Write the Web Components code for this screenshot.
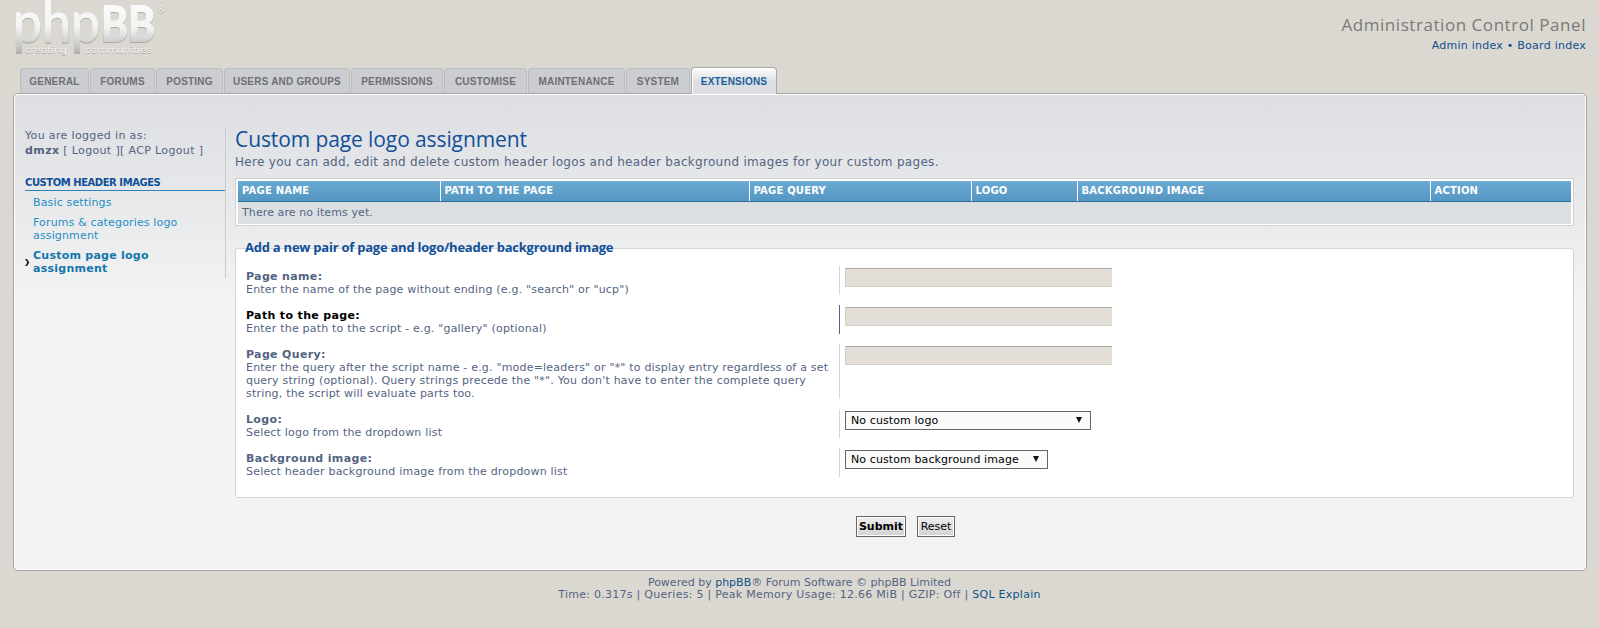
<!DOCTYPE html>
<html>
<head>
<meta charset="utf-8">
<title>Custom page logo assignment</title>
<style>
html, body { margin: 0; padding: 0; background: #dbd8d1; }
body { font-family: "DejaVu Sans", Verdana, sans-serif; font-size: 11px; color: #536482; }
</style>
</head>
<body>
<acp-page>
  <acp-header slot="header"></acp-header>
  <acp-tabs slot="tabs">
    <acp-tab w="69">GENERAL</acp-tab>
    <acp-tab w="65">FORUMS</acp-tab>
    <acp-tab w="67">POSTING</acp-tab>
    <acp-tab w="126">USERS AND GROUPS</acp-tab>
    <acp-tab w="92">PERMISSIONS</acp-tab>
    <acp-tab w="83">CUSTOMISE</acp-tab>
    <acp-tab w="97">MAINTENANCE</acp-tab>
    <acp-tab w="64">SYSTEM</acp-tab>
    <acp-tab w="86" active>EXTENSIONS</acp-tab>
  </acp-tabs>
  <acp-panel slot="panel">
    <acp-side slot="side"></acp-side>
    <acp-title>
      <span slot="title">Custom page logo assignment</span>
      Here you can add, edit and delete custom header logos and header background images for your custom pages.
    </acp-title>
    <acp-table></acp-table>
    <acp-fieldset legend="Add a new pair of page and logo/header background image">
      <acp-row>
        <span slot="label">Page name:</span>
        Enter the name of the page without ending (e.g. "search" or "ucp")
        <acp-input slot="field"></acp-input>
      </acp-row>
      <acp-row hover>
        <span slot="label">Path to the page:</span>
        Enter the path to the script - e.g. "gallery" (optional)
        <acp-input slot="field"></acp-input>
      </acp-row>
      <acp-row>
        <span slot="label">Page Query:</span>
        Enter the query after the script name - e.g. "mode=leaders" or "*" to display entry regardless of a set query string (optional). Query strings precede the "*". You don't have to enter the complete query string, the script will evaluate parts too.
        <acp-input slot="field"></acp-input>
      </acp-row>
      <acp-row>
        <span slot="label">Logo:</span>
        Select logo from the dropdown list
        <acp-select slot="field" w="246">No custom logo</acp-select>
      </acp-row>
      <acp-row>
        <span slot="label">Background image:</span>
        Select header background image from the dropdown list
        <acp-select slot="field" w="203">No custom background image</acp-select>
      </acp-row>
    </acp-fieldset>
    <acp-buttons></acp-buttons>
  </acp-panel>
  <acp-footer slot="footer"></acp-footer>
</acp-page>

<script>
const FONT = '"DejaVu Sans", Verdana, sans-serif'
const TITLE_FONT = '"Open Sans", "DejaVu Sans", sans-serif'

// small helper, every element is the same: open shadow root + markup
function define(name, html) {
  customElements.define(name, class extends HTMLElement {
    connectedCallback() {
      if (this.shadowRoot) return
      this.attachShadow({ mode: 'open' })
      this.shadowRoot.innerHTML = typeof html === 'function' ? html(this) : html
    }
  })
}

define('acp-page', `
<style>
  :host { display: block; width: 1599px; height: 628px; overflow: hidden; }
  .wrap { padding: 0 12px 0 13px; }
</style>
<slot name="header"></slot>
<div class="wrap"><slot name="tabs"></slot><slot name="panel"></slot></div>
<slot name="footer"></slot>
`)

define('acp-header', `
<style>
  :host { display: flex; justify-content: space-between; height: 67px; box-sizing: border-box; padding: 0 13px 0 0; }
  svg { display: block; }
  .right { text-align: right; padding-top: 15px; }
  .acp { font: 17px/20px ${TITLE_FONT}; color: #7a7a78; letter-spacing: 0.55px; }
  .nav { font: 11px/14px ${FONT}; color: #114d8f; margin-top: 4px; letter-spacing: 0.25px; }
</style>
<svg width="172" height="64" viewBox="0 0 172 64">
  <defs>
    <linearGradient id="lg" x1="0" y1="0" x2="0" y2="1">
      <stop offset="0" stop-color="#ffffff"/>
      <stop offset="0.6" stop-color="#f2f2f2"/>
      <stop offset="1" stop-color="#b4b4b4"/>
    </linearGradient>
    <filter id="edge" x="-10%" y="-10%" width="120%" height="120%">
      <feDropShadow dx="0" dy="0.5" stdDeviation="0.7" flood-color="#6f6f6c" flood-opacity="0.9"/>
    </filter>
  </defs>
  <g filter="url(#edge)">
    <text x="13" y="42" font-family="Lato, 'DejaVu Sans', sans-serif" font-size="56" textLength="87" lengthAdjust="spacingAndGlyphs" fill="url(#lg)" stroke="url(#lg)" stroke-width="1.5">php</text>
    <text x="101" y="41" font-family="Lato, 'DejaVu Sans', sans-serif" font-size="48" font-weight="700" textLength="54" lengthAdjust="spacingAndGlyphs" fill="url(#lg)" stroke="url(#lg)" stroke-width="2">BB</text>
    <text x="156" y="13" font-family="'DejaVu Sans', sans-serif" font-size="10" fill="#f7f7f5">®</text>
    <text x="25" y="53" font-family="'DejaVu Sans', sans-serif" font-size="9" textLength="42" lengthAdjust="spacingAndGlyphs" fill="#f5f5f3">creating</text>
    <text x="85" y="53" font-family="'DejaVu Sans', sans-serif" font-size="9" textLength="67" lengthAdjust="spacingAndGlyphs" fill="#f5f5f3">communities</text>
  </g>
</svg>
<div class="right">
  <div class="acp">Administration Control Panel</div>
  <div class="nav">Admin index • Board index</div>
</div>
`)

define('acp-tabs', `
<style>
  :host { display: flex; gap: 1px; padding-left: 7px; height: 26px; align-items: flex-end; position: relative; z-index: 1; }
</style>
<slot></slot>
`)

define('acp-tab', el => {
  const on = el.hasAttribute('active')
  return `
<style>
  :host {
    display: block; box-sizing: border-box; width: ${el.getAttribute('w')}px;
    height: ${on ? 27 : 25}px;
    margin-bottom: ${on ? -1 : 0}px;
    border: 1px solid ${on ? '#a9a9a9' : '#bcbcbc'};
    border-bottom: ${on ? 'none' : '1px solid #cbcdd2'};
    border-radius: 4px 4px 0 0;
    background: ${on ? 'linear-gradient(#fff, #dcdee2 50%)' : '#cbcdd2'};
    box-shadow: ${on ? 'inset 1px 1px 0 #fff' : 'none'};
    color: ${on ? '#1d5e9a' : '#707070'};
    font: bold 10px/${on ? 27 : 25}px "Liberation Sans", Arial, sans-serif;
    letter-spacing: 0.2px; text-align: center; white-space: nowrap;
  }
</style>
<slot></slot>
`
})

define('acp-panel', `
<style>
  :host {
    display: grid; grid-template-columns: 201px 1fr; box-sizing: border-box; height: 478px;
    border: 1px solid #a4a4a2; border-radius: 5px; box-shadow: inset 1px 1px 0 #fff, inset -1px -1px 0 #fff;
    background: linear-gradient(#dcdee2, #f3f3f3 210px);
    padding: 33px 12px 0 11px;
  }
  .main { padding-left: 9px; min-width: 0; }
  .side { grid-row: 1; }
</style>
<div class="side"><slot name="side"></slot></div>
<div class="main"><slot></slot></div>
`)

define('acp-side', `
<style>
  :host { display: block; box-sizing: border-box; height: 151px; border-right: 1px solid #c9cbcf; font: 11px/15px ${FONT}; color: #536482; }
  .who { padding-top: 1px; letter-spacing: 0.35px; }
  b { letter-spacing: 0.4px; }
  h2 { margin: 18px 0 0; font: bold 10px/13px ${FONT}; color: #115098; border-bottom: 1px solid #2f82bb; padding-bottom: 1px; letter-spacing: -0.45px; }
  ul { list-style: none; margin: 5px 0 0; padding: 0 0 0 8px; color: #1f8fc4; font-size: 11px; line-height: 13px; letter-spacing: 0.15px; }
  li { margin-bottom: 7px; position: relative; }
  li.on { color: #1377ac; font-weight: bold; letter-spacing: 0.25px; }
  li.on svg { position: absolute; left: -8px; top: 10px; }
</style>
<div class="who">You are logged in as:<br><b>dmzx</b> [ Logout ][ ACP Logout ]</div>
<h2>CUSTOM HEADER IMAGES</h2>
<ul>
  <li>Basic settings</li>
  <li>Forums &amp; categories logo assignment</li>
  <li class="on"><svg width="5" height="7" viewBox="0 0 5 7"><path d="M0 0h2l2 3v1L2 7H0l2-3V3z" fill="#222"/></svg>Custom page logo assignment</li>
</ul>
`)

define('acp-title', `
<style>
  :host { display: block; font: 12px/14px ${FONT}; color: #536482; letter-spacing: 0.3px; white-space: nowrap; }
  .h { font: 21px/26px ${TITLE_FONT}; color: #115098; letter-spacing: -0.1px; margin-bottom: 3px; margin-top: -1px; }
</style>
<div class="h"><slot name="title"></slot></div>
<slot></slot>
`)

define('acp-table', `
<style>
  :host { display: block; margin-top: 9px; box-sizing: border-box; height: 48px; border: 1px solid #cfd1d6; background: #fff; padding: 2px; }
  table { width: 100%; border-collapse: collapse; table-layout: fixed; }
  th {
    height: 20px; padding: 0 0 0 4px; box-sizing: border-box; text-align: left;
    background: linear-gradient(#6aaad3, #5496c2); border-bottom: 1px solid #2b7196; border-left: 1px solid #fff;
    color: #fff; font: bold 10px/14px ${FONT}; letter-spacing: 0.2px;
  }
  th:first-child { border-left: none; }
  td { height: 22px; padding: 0 0 0 4px; background: #dcdfe2; font: 11px/14px ${FONT}; color: #536482; letter-spacing: 0.1px; }
</style>
<table>
  <colgroup><col style="width:202px"><col style="width:309px"><col style="width:222px"><col style="width:106px"><col style="width:353px"><col style="width:141px"></colgroup>
  <tr><th>PAGE NAME</th><th>PATH TO THE PAGE</th><th>PAGE QUERY</th><th>LOGO</th><th>BACKGROUND IMAGE</th><th>ACTION</th></tr>
  <tr><td colspan="6">There are no items yet.</td></tr>
</table>
`)

define('acp-fieldset', el => `
<style>
  :host { display: block; position: relative; margin-top: 22px; box-sizing: border-box; height: 250px; border: 1px solid #d3d5d9; border-radius: 3px; background: #fff; padding: 17px 0 0 10px; }
  .legend { position: absolute; left: 9px; top: -10px; font: bold 13px/16px ${TITLE_FONT}; color: #115098; white-space: nowrap; letter-spacing: -0.24px; }
  .rows { display: flex; flex-direction: column; gap: 9px; }
</style>
<div class="legend">${el.getAttribute('legend')}</div>
<div class="rows"><slot></slot></div>
`)

define('acp-row', el => `
<style>
  :host { display: grid; grid-template-columns: 593px 1fr; font: 11px/13px ${FONT}; color: #536482; }
  .dt { padding: 4px 4px 0 0; letter-spacing: 0.2px; }
  .label { font-weight: bold; letter-spacing: 0.35px; color: ${el.hasAttribute('hover') ? '#000' : '#536482'}; }
  .dd { border-left: 1px solid ${el.hasAttribute('hover') ? '#536482' : '#d5d5d5'}; padding: 2px 0 0 5px; margin-bottom: 1px; }
</style>
<div class="dt"><div class="label"><slot name="label"></slot></div><slot></slot></div>
<div class="dd"><slot name="field"></slot></div>
`)

define('acp-input', `
<style>
  :host { display: block; }
  input { display: block; box-sizing: border-box; width: 267px; height: 19px; margin: 0; padding: 0; outline: none; background: #e3dfd8; border: 1px solid #d3d0c4; border-top-color: #aaa89f; border-left-color: #d3d0c4; border-right: none; }
</style>
<input type="text">
`)

define('acp-select', el => `
<style>
  :host { display: block; box-sizing: border-box; position: relative; width: ${el.getAttribute('w')}px; height: 19px; border: 1px solid #666; background: #fafafa; color: #000; font: 11px/17px ${FONT}; padding-left: 5px; letter-spacing: 0.1px; }
  i { position: absolute; right: 8px; top: 5px; width: 0; height: 0; border: 3px solid transparent; border-top: 6px solid #111; border-bottom: 0; }
</style>
<slot></slot><i></i>
`)

define('acp-buttons', `
<style>
  :host { display: flex; justify-content: flex-start; gap: 11px; margin-top: 18px; padding-left: 621px; }
  button { box-sizing: border-box; height: 21px; margin: 0; padding: 0; border: 1px solid #666; box-shadow: inset 0 0 0 1px #fff; border-radius: 0; background: linear-gradient(#efefef, #d2d2d2); color: #000; font: 11px/17px ${FONT}; }
  .s { width: 50px; font-weight: bold; }
  .r { width: 38px; }
</style>
<button class="s">Submit</button><button class="r">Reset</button>
`)

define('acp-footer', `
<style>
  :host { display: block; text-align: center; font: 11px/12px ${FONT}; color: #536482; padding-top: 6px; }
  a { color: #105289; }
  .t { letter-spacing: 0.27px; }
</style>
<div>Powered by <a>phpBB</a>® Forum Software © phpBB Limited</div>
<div class="t">Time: 0.317s | Queries: 5 | Peak Memory Usage: 12.66 MiB | GZIP: Off | <a>SQL Explain</a></div>
`)
</script>
</body>
</html>
